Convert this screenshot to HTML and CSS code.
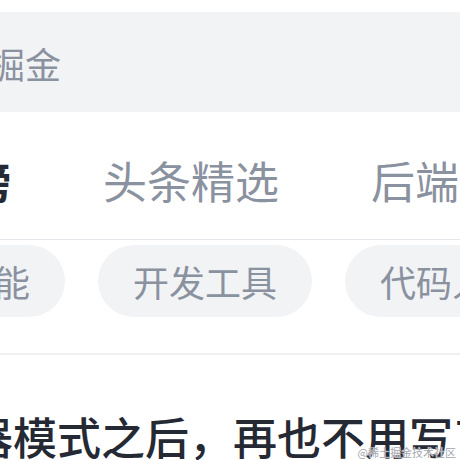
FILE: index.html
```html
<!DOCTYPE html>
<html lang="zh-CN">
<head>
<meta charset="utf-8">
<title>掘金</title>
<link rel="stylesheet" href="styles.css">
</head>
<body>
<div class="page">
  <div class="search"><span class="search-text">搜索稀土掘金</span></div>
  <nav class="tabs">
    <span class="tab active">热榜</span>
    <span class="tab">头条精选</span>
    <span class="tab">后端</span>
  </nav>
  <div class="tags">
    <span class="tag">人工智能</span>
    <span class="tag">开发工具</span>
    <span class="tag">代码人生</span>
  </div>
  <div class="article">
    <h2 class="title">器模式之后，再也不用写了</h2>
  </div>
  <div class="watermark">@稀土掘金技术社区</div>
</div>
</body>
</html>
```
FILE: styles.css
```css
html, body {
  margin: 0;
  padding: 0;
  background: #fff;
}
body {
  width: 460px;
  height: 460px;
  overflow: hidden;
  font-family: "Noto Sans CJK SC", "Noto Sans", sans-serif;
}
.page {
  position: relative;
  width: 460px;
  height: 460px;
  overflow: hidden;
  padding-top: 12px;
  box-sizing: border-box;
}
.search {
  height: 100px;
  background: #f2f3f5;
  display: flex;
  align-items: center;
  white-space: nowrap;
}
.search-text {
  margin-left: -155px;
  font-size: 36px;
  line-height: 36px;
  color: #8a919f;
  padding-top: 2px;
}
.tabs {
  display: flex;
  gap: 92px;
  margin-left: -77px;
  width: 700px;
  padding: 46px 0 37px;
  border-bottom: 1px solid #e4e6eb;
  white-space: nowrap;
}
.tab {
  font-size: 44px;
  line-height: 44px;
  color: #8a919f;
  flex: none;
}
.tab.active {
  color: #252933;
  font-weight: 700;
}
.tags {
  display: flex;
  gap: 33px;
  margin-left: -149px;
  width: 800px;
  padding: 5px 0 36px;
  border-bottom: 2px solid #f0f1f4;
  white-space: nowrap;
}
.tag {
  flex: none;
  height: 72px;
  padding: 0 35px;
  border-radius: 36px;
  background: #f2f3f5;
  color: #8a919f;
  font-size: 36px;
  line-height: 72px;
}
.article {
  padding-top: 59px;
  white-space: nowrap;
}
.title {
  margin: 0 0 0 -31px;
  font-size: 44px;
  line-height: 44px;
  font-weight: 500;
  color: #252933;
}
.watermark {
  position: absolute;
  right: 4px;
  bottom: 2px;
  font-size: 11px;
  line-height: 12px;
  color: #a3a6ad;
  text-shadow: 0 0 1px #fff, 0 0 1px #fff;
  white-space: nowrap;
}
```
